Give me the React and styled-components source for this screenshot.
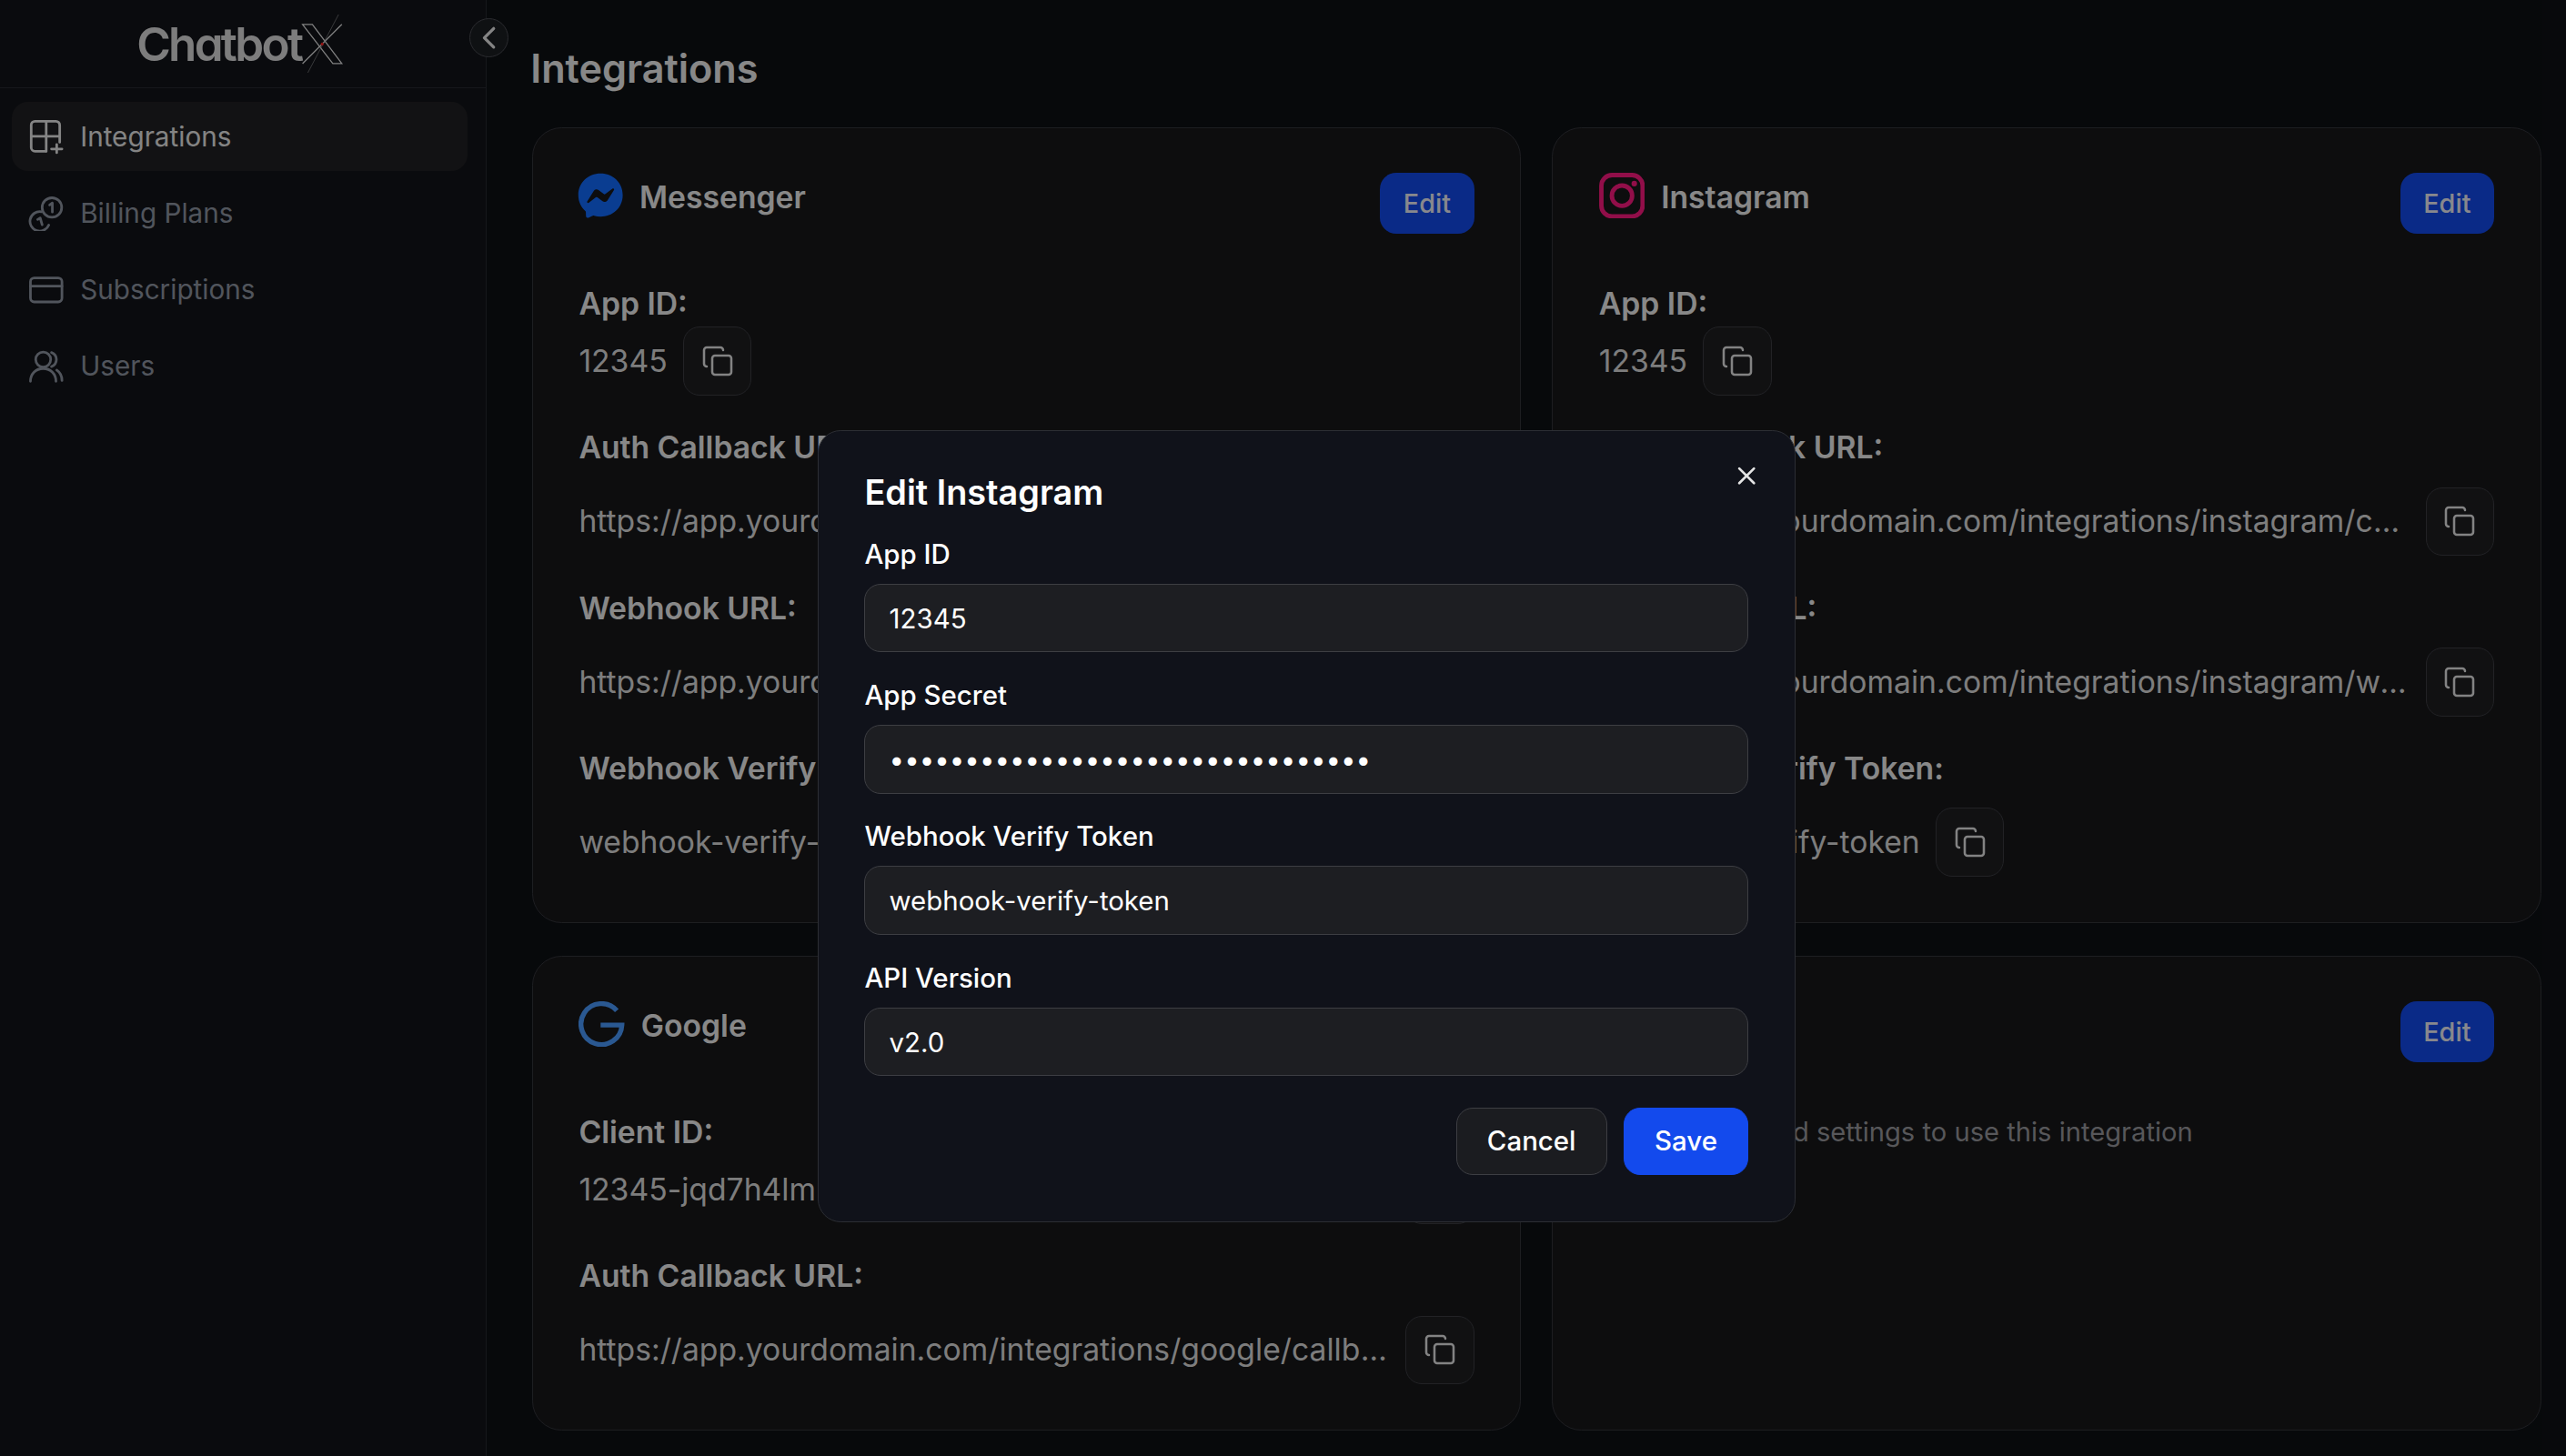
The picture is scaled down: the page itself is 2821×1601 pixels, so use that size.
import React from "react";
import styled, { createGlobalStyle } from "styled-components";
import { Copy, X, ChevronLeft } from "lucide-react";
import { FaFacebookMessenger } from "react-icons/fa";

const Global = createGlobalStyle`
  html, body { margin: 0; padding: 0; background: #0e1014; overflow: hidden; }
  #root { zoom: 1.8; }
  * { box-sizing: border-box; }
`;

const Page = styled.div`
  position: relative;
  width: 1567.3px;
  height: 889.5px;
  display: flex;
  overflow: hidden;
  background: #0e1015;
  color: #f2f2f2;
  font-family: Inter, "Liberation Sans", sans-serif;
`;

const Sidebar = styled.aside`
  position: relative;
  flex: 0 0 297px;
  background: #13151a;
  border-right: 1px solid #272a30;
`;

const LogoBar = styled.div`
  height: 54px;
  display: flex;
  align-items: center;
  justify-content: center;
  border-bottom: 1px solid #272a30;
  padding-right: 2px;
`;

const LogoText = styled.span`
  font-size: 28.4px;
  font-weight: 600;
  letter-spacing: -1.5px;
  color: #dcdcdc;
  font-feature-settings: "cv11" 1;
  line-height: 1;
`;

const LogoMark = styled.svg`
  width: 28px;
  height: 36px;
  margin-left: -1px;
`;

const Collapse = styled.button`
  position: absolute;
  top: 11px;
  right: -14px;
  width: 24px;
  height: 24px;
  padding: 0;
  border-radius: 50%;
  border: 1px solid #4a4c52;
  background: #1c1e23;
  color: #e8e8e8;
  display: flex;
  align-items: center;
  justify-content: center;
`;

const Nav = styled.nav`
  display: flex;
  flex-direction: column;
  gap: 4.7px;
  padding: 8.5px 11px 0 7px;
`;

const NavItem = styled.a`
  height: 42px;
  display: flex;
  align-items: center;
  gap: 10px;
  padding-left: 10px;
  border-radius: 10px;
  font-size: 16.5px;
  font-weight: 400;
  background: ${(p) => (p.$active ? "#212124" : "transparent")};
  color: ${(p) => (p.$active ? "#e8e8e8" : "#8f96a3")};
`;

const NavIcon = styled.svg`
  flex: 0 0 22px;
  width: 22px;
  height: 22px;
  fill: none;
  stroke: currentColor;
  stroke-width: 1.7;
  stroke-linecap: round;
  stroke-linejoin: round;
`;

const Main = styled.main`
  flex: 1;
  min-width: 0;
  padding: 26px 15.3px 0 28px;
`;

const Heading = styled.h1`
  margin: 0 0 20px -1px;
  font-size: 24px;
  line-height: 32px;
  font-weight: 600;
  color: #f0f0f0;
`;

const Grid = styled.div`
  display: grid;
  grid-template-columns: 1fr 1fr;
  gap: 20px 19px;
`;

const Card = styled.section`
  min-width: 0;
  padding: 27px 28px 28px;
  background: #17171a;
  border: 1px solid #34353b;
  border-radius: 18px;
`;

const CardHead = styled.header`
  display: flex;
  justify-content: space-between;
  align-items: flex-start;
  margin-bottom: 29px;
`;

const Brand = styled.div`
  display: flex;
  align-items: center;
  gap: 10px;
  height: 28px;
  font-size: 18.72px;
  font-weight: 600;
  color: #efefef;
`;

const BrandName = styled.span`
  margin-top: 2px;
`;

const EditButton = styled.button`
  height: 37px;
  width: 57.6px;
  padding: 0;
  border: none;
  border-radius: 10px;
  background: #134aed;
  color: #f0f0f8;
  font: 500 16px Inter, sans-serif;
`;

const Field = styled.div`
  margin-bottom: 18px;
  &:last-child { margin-bottom: 0; }
`;

const Label = styled.div`
  font-size: 18.72px;
  line-height: 28px;
  font-weight: 600;
  color: #f0f0f0;
`;

const ValueRow = styled.div`
  display: flex;
  align-items: center;
  gap: 9.5px;
  margin-top: ${(p) => (p.$tight ? 0 : 10)}px;
`;

const Value = styled.span`
  flex: ${(p) => (p.$grow ? 1 : "0 1 auto")};
  min-width: 0;
  font-size: 18.72px;
  line-height: 28px;
  white-space: nowrap;
  overflow: hidden;
  text-overflow: ellipsis;
  color: #dcdcdc;
`;

const CopyButton = styled.button`
  flex: 0 0 42px;
  width: 42px;
  height: 42px;
  padding: 0;
  border-radius: 10px;
  border: 1px solid #3c3d42;
  background: #1e1e21;
  color: #e6e6e6;
  display: flex;
  align-items: center;
  justify-content: center;
`;

const Hint = styled.p`
  margin: 5px 0 0;
  font-size: 16.2px;
  line-height: 28px;
  color: #9a9a9e;
`;

const Backdrop = styled.div`
  position: absolute;
  inset: 0;
  background: rgba(0, 0, 0, 0.43);
`;

const Modal = styled.div`
  position: absolute;
  left: 499.5px;
  top: 263px;
  width: 597px;
  padding: 23px 28px 28px;
  background: #10121a;
  border: 1px solid #2c2e34;
  border-radius: 14px;
`;

const Close = styled.button`
  position: absolute;
  top: 18px;
  right: 20px;
  width: 18px;
  height: 18px;
  padding: 0;
  border: none;
  background: none;
  color: #e4e4e4;
  display: flex;
  align-items: center;
  justify-content: center;
`;

const ModalTitle = styled.h2`
  margin: 0 0 12px;
  font-size: 21px;
  line-height: 28px;
  font-weight: 600;
  color: #fff;
`;

const FormField = styled.label`
  display: block;
  margin-bottom: 14.3px;
  font-size: 16.35px;
  line-height: 24px;
  font-weight: 500;
  color: #fff;
`;

const Input = styled.input`
  display: block;
  width: 100%;
  height: 42px;
  margin-top: 6px;
  padding: 0 14.5px;
  background: #1d1e22;
  border: 1px solid #3d3e43;
  border-radius: 10px;
  color: #fff;
  font: 400 16.35px Inter, sans-serif;
  outline: none;
`;

const Actions = styled.div`
  display: flex;
  justify-content: flex-end;
  gap: 10px;
  margin-top: 19px;
`;

const ActionButton = styled.button`
  height: 41.5px;
  padding: 0 ${(p) => (p.$primary ? 18.5 : 18.5)}px 1px;
  border-radius: 10px;
  border: 1px solid ${(p) => (p.$primary ? "#134aed" : "#3d3e43")};
  background: ${(p) => (p.$primary ? "#134aed" : "#1b1c20")};
  color: #fff;
  font: 500 16.35px Inter, sans-serif;
`;

const BrandIcon = styled.svg`
  flex: 0 0 28px;
  width: 28px;
  height: 28px;
`;

const IntegrationsIcon = () => (
  <NavIcon viewBox="0 0 24 24">
    <path d="M12 22H4.500A2.500 2.500 0 0 1 2 19.500v-15A2.500 2.500 0 0 1 4.500 2h14A2.500 2.500 0 0 1 21 4.500V16" />
    <path d="M12 2v20M2 12h19M19 17.500v5.500M15.500 20.500h7" />
  </NavIcon>
);
const CoinsIcon = () => (
  <NavIcon viewBox="0 0 24 24">
    <circle cx="15.800" cy="8" r="6.500" />
    <path d="M8.700 10.800a6.500 6.500 0 1 0 5 8.900" />
    <path d="M14.300 6.300l1.800-1.300v6M6.300 16l1.700-1 1.300 4.500" />
  </NavIcon>
);
const CardIcon = () => (
  <NavIcon viewBox="0 0 24 24">
    <rect x="1.500" y="4" width="21" height="16" rx="2.500" />
    <path d="M1.500 9.500h21" />
  </NavIcon>
);
const UsersIcon = () => (
  <NavIcon viewBox="0 0 24 24">
    <circle cx="10" cy="7.500" r="5" />
    <path d="M1.500 22c0-5 3.500-8.500 8.500-8.500s8.500 3.500 8.500 8.500" />
    <path d="M15.500 2.800a5 5 0 0 1 0 9.400M19 14.500c2.200 1.500 3.500 4 3.500 7" />
  </NavIcon>
);

const MessengerIcon = () => (
  <FaFacebookMessenger size={28} color="#126cff" style={{ flex: "0 0 28px", marginLeft: "-1px" }} />
);
const InstagramIcon = () => (
  <BrandIcon viewBox="0 0 28 28" fill="none" stroke="#ff1a80" strokeWidth="2.700">
    <rect x="1.400" y="1.400" width="25.200" height="25.200" rx="6.500" />
    <circle cx="14" cy="14" r="6.200" />
    <circle cx="21.500" cy="6.600" r="1.700" fill="#ff1a80" stroke="none" />
  </BrandIcon>
);
const GoogleIcon = () => (
  <BrandIcon viewBox="0 0 28 28" fill="none" stroke="#4a9bff" strokeWidth="3">
    <path d="M23.400 5.700A12.500 12.500 0 1 0 26.500 14.500H13.500" />
  </BrandIcon>
);

const Copier = () => (
  <CopyButton aria-label="Copy">
    <Copy size={20} strokeWidth={1.7} />
  </CopyButton>
);

const Row = ({ label, value, tight }) => (
  <Field>
    <Label>{label}</Label>
    <ValueRow $tight={tight}>
      <Value>{value}</Value>
      <Copier />
    </ValueRow>
  </Field>
);

export default function App() {
  return (
    <Page>
      <Global />
      <Sidebar>
        <LogoBar>
          <LogoText>Chatbot</LogoText>
          <LogoMark viewBox="0 0 28 36" fill="none" aria-label="X">
            <path d="M2 6h6L26 30h-5.500z" stroke="#e4e4e4" strokeWidth="0.700" />
            <path d="M26 6L2 30" stroke="#e4e4e4" strokeWidth="0.700" />
            <path d="M24 0L5 36" stroke="#aaa" strokeWidth="0.300" />
            <circle cx="14" cy="18" r="0.900" fill="#ff2020" />
          </LogoMark>
        </LogoBar>
        <Collapse aria-label="Collapse">
          <ChevronLeft size={24} strokeWidth={1.9} />
        </Collapse>
        <Nav>
          <NavItem $active><IntegrationsIcon />Integrations</NavItem>
          <NavItem><CoinsIcon />Billing Plans</NavItem>
          <NavItem><CardIcon />Subscriptions</NavItem>
          <NavItem><UsersIcon />Users</NavItem>
        </Nav>
      </Sidebar>
      <Main>
        <Heading>Integrations</Heading>
        <Grid>
          <Card>
            <CardHead>
              <Brand><MessengerIcon /><BrandName>Messenger</BrandName></Brand>
              <EditButton>Edit</EditButton>
            </CardHead>
            <Row label="App ID:" value="12345" tight />
            <Row label="Auth Callback URL:" value="https://app.yourdomain.com/integrations/messenger/callback" />
            <Row label="Webhook URL:" value="https://app.yourdomain.com/integrations/messenger/webhook" />
            <Row label="Webhook Verify Token:" value="webhook-verify-token" />
          </Card>
          <Card>
            <CardHead>
              <Brand><InstagramIcon /><BrandName>Instagram</BrandName></Brand>
              <EditButton>Edit</EditButton>
            </CardHead>
            <Row label="App ID:" value="12345" tight />
            <Row label="Auth Callback URL:" value="https://app.yourdomain.com/integrations/instagram/callback" />
            <Row label="Webhook URL:" value="https://app.yourdomain.com/integrations/instagram/webhook" />
            <Row label="Webhook Verify Token:" value="webhook-verify-token" />
          </Card>
          <Card>
            <CardHead>
              <Brand><GoogleIcon /><BrandName>Google</BrandName></Brand>
              <EditButton>Edit</EditButton>
            </CardHead>
            <Row label="Client ID:" value="12345-jqd7h4lmn8abcdefghijklmnopqrstuv.apps.googleusercontent.com" tight />
            <Row label="Auth Callback URL:" value="https://app.yourdomain.com/integrations/google/callback" />
          </Card>
          <Card>
            <CardHead>
              <Brand><BrandName>Website</BrandName></Brand>
              <EditButton>Edit</EditButton>
            </CardHead>
            <Hint>Add the required settings to use this integration</Hint>
          </Card>
        </Grid>
      </Main>
      <Backdrop />
      <Modal>
        <Close aria-label="Close"><X size={18} strokeWidth={2} /></Close>
        <ModalTitle>Edit Instagram</ModalTitle>
        <FormField>App ID<Input readOnly value="12345" /></FormField>
        <FormField>App Secret<Input readOnly type="password" value="abcdefghijklmnopqrstuvwxyz123456" /></FormField>
        <FormField>Webhook Verify Token<Input readOnly value="webhook-verify-token" /></FormField>
        <FormField>API Version<Input readOnly value="v2.0" /></FormField>
        <Actions>
          <ActionButton>Cancel</ActionButton>
          <ActionButton $primary>Save</ActionButton>
        </Actions>
      </Modal>
    </Page>
  );
}
